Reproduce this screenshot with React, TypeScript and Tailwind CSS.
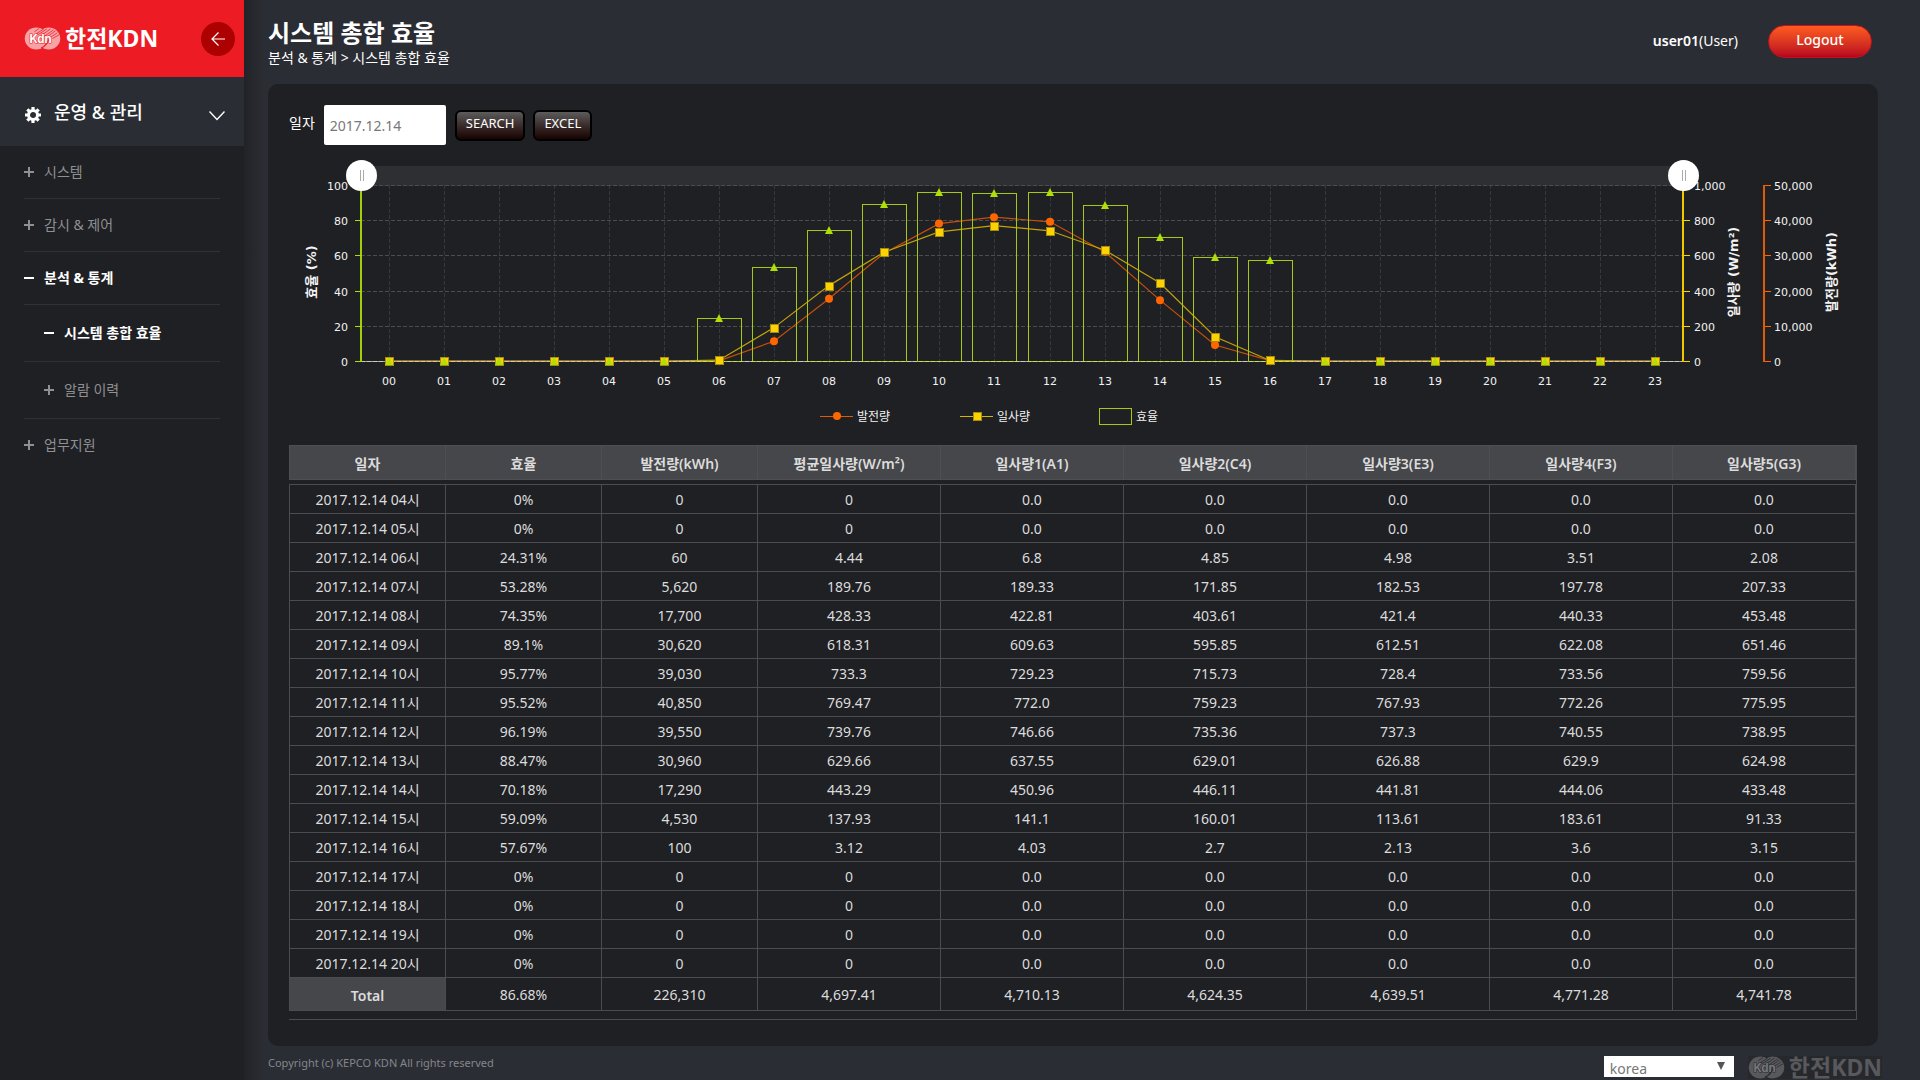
import { useState } from "react";

const CHART_LEFT = 72;
const CHART_RIGHT = 1394;
const CHART_TOP = 40;
const CHART_BOTTOM = 216;
const STEP = (CHART_RIGHT - CHART_LEFT) / 24;
const BAR_WIDTH = 44;

const headers = [
  "일자",
  "효율",
  "발전량(kWh)",
  "평균일사량(W/m²)",
  "일사량1(A1)",
  "일사량2(C4)",
  "일사량3(E3)",
  "일사량4(F3)",
  "일사량5(G3)",
];

const rows = [
  ["04", "0%", "0", "0", "0.0", "0.0", "0.0", "0.0", "0.0"],
  ["05", "0%", "0", "0", "0.0", "0.0", "0.0", "0.0", "0.0"],
  ["06", "24.31%", "60", "4.44", "6.8", "4.85", "4.98", "3.51", "2.08"],
  ["07", "53.28%", "5,620", "189.76", "189.33", "171.85", "182.53", "197.78", "207.33"],
  ["08", "74.35%", "17,700", "428.33", "422.81", "403.61", "421.4", "440.33", "453.48"],
  ["09", "89.1%", "30,620", "618.31", "609.63", "595.85", "612.51", "622.08", "651.46"],
  ["10", "95.77%", "39,030", "733.3", "729.23", "715.73", "728.4", "733.56", "759.56"],
  ["11", "95.52%", "40,850", "769.47", "772.0", "759.23", "767.93", "772.26", "775.95"],
  ["12", "96.19%", "39,550", "739.76", "746.66", "735.36", "737.3", "740.55", "738.95"],
  ["13", "88.47%", "30,960", "629.66", "637.55", "629.01", "626.88", "629.9", "624.98"],
  ["14", "70.18%", "17,290", "443.29", "450.96", "446.11", "441.81", "444.06", "433.48"],
  ["15", "59.09%", "4,530", "137.93", "141.1", "160.01", "113.61", "183.61", "91.33"],
  ["16", "57.67%", "100", "3.12", "4.03", "2.7", "2.13", "3.6", "3.15"],
  ["17", "0%", "0", "0", "0.0", "0.0", "0.0", "0.0", "0.0"],
  ["18", "0%", "0", "0", "0.0", "0.0", "0.0", "0.0", "0.0"],
  ["19", "0%", "0", "0", "0.0", "0.0", "0.0", "0.0", "0.0"],
  ["20", "0%", "0", "0", "0.0", "0.0", "0.0", "0.0", "0.0"],
];

const totals = ["86.68%", "226,310", "4,697.41", "4,710.13", "4,624.35", "4,639.51", "4,771.28", "4,741.78"];

const hours = Array.from({ length: 24 }, (_, i) => String(i).padStart(2, "0"));

const toNumber = (value: string) => parseFloat(value.replace(/,/g, ""));

const points = hours.map((hour, i) => {
  const row = rows.find((r) => r[0] === hour);
  const y = (value: number, max: number) =>
    CHART_BOTTOM - (value / max) * (CHART_BOTTOM - CHART_TOP);
  return {
    hour,
    x: Math.round(CHART_LEFT + STEP * (i + 0.5)),
    efficiency: Math.round(y(row ? toNumber(row[1]) : 0, 100)),
    power: y(row ? toNumber(row[2]) : 0, 50000),
    solar: y(row ? toNumber(row[3]) : 0, 1000),
  };
});

function Logo({ muted = false }: { muted?: boolean }) {
  const back = muted ? "#58595d" : "#f7a3a6";
  const line = muted ? "#28292d" : "#ed1c24";
  return (
    <div className={`flex items-center gap-1 ${muted ? "bg-[#27282c] text-[#58595d]" : "text-white"}`}>
      <svg width="37" height="23" viewBox="0 0 37 24">
        <ellipse cx="25" cy="12" rx="12" ry="11.5" fill={back} />
        <ellipse cx="12" cy="12" rx="12" ry="11.5" fill={back} />
        <g stroke={line} strokeWidth="0.8" fill="none">
          <path d="M10 5 L15 1.500 M12 7 L20 2 M14 8 L23 2 M14 11 L27 2 M17 12 L30 3 M21 12 L32 4 M25 12 L34 6 M29 12 L36 8" />
          <path d="M17 22 C22 20 24 16 25 13" strokeWidth="1.2" />
        </g>
        <text
          x="5"
          y="17"
          fontSize="12"
          fontWeight="700"
          fontFamily="Inter, sans-serif"
          fill={muted ? "#77787c" : "#fff"}
          stroke={line}
          strokeWidth="1.2"
          paintOrder="stroke"
        >
          Kdn
        </text>
      </svg>
      <span className="text-[23px] leading-[23px] font-bold">한전KDN</span>
    </div>
  );
}

function GearIcon() {
  return (
    <svg width="16" height="16" viewBox="0 0 16 16" fill="#fff">
      {[0, 45, 90, 135].map((angle) => (
        <path key={angle} d="M6.4 0h3.2v4H6.4zM6.4 12h3.2v4H6.4z" transform={`rotate(${angle} 8 8)`} />
      ))}
      <circle cx="8" cy="8" r="4.5" fill="none" stroke="#fff" strokeWidth="3" />
    </svg>
  );
}

type MenuItemProps = {
  label: string;
  open?: boolean;
  sub?: boolean;
  last?: boolean;
};

function MenuItem({ label, open, sub, last }: MenuItemProps) {
  return (
    <li className={last ? "" : "border-b border-[#303135]"}>
      <a
        href="#"
        className={`flex items-center gap-[10px] text-sm ${sub ? "h-14 pl-5" : "h-[52px]"} ${
          open ? "font-bold text-white" : "text-[#8f9093]"
        }`}
      >
        <svg width="10" height="10" viewBox="0 0 10 10" fill="currentColor">
          <path d="M0 4h10v2H0z" />
          {!open && <path d="M4 0h2v10H4z" />}
        </svg>
        {label}
      </a>
    </li>
  );
}

function Sidebar() {
  return (
    <aside className="w-[244px] shrink-0 bg-[#1f2024]">
      <div className="flex h-[77px] items-center justify-between bg-[#ed1c24] pr-[9px] pl-6">
        <Logo />
        <button aria-label="메뉴 닫기" className="flex size-[34px] items-center justify-center rounded-full bg-[#ad0000]">
          <svg width="14" height="14" viewBox="0 0 14 14" fill="none" stroke="#fff" strokeWidth="1.2">
            <path d="M14 7H1M7.500 0.500L1 7l6.500 6.500" />
          </svg>
        </button>
      </div>
      <button className="flex h-[69px] w-full items-center bg-[#2b2d34] pr-[19px] pl-[25px] text-white">
        <span className="pt-1.5">
          <GearIcon />
        </span>
        <span className="ml-[13px] grow text-left text-lg font-medium">운영 &amp; 관리</span>
        <svg className="mt-2" width="16" height="10" viewBox="0 0 16 10" fill="none" stroke="#fff" strokeWidth="1.4">
          <path d="M0.500 0.500L8 8.500l7.500-8" />
        </svg>
      </button>
      <ul className="px-6">
        <MenuItem label="시스템" />
        <MenuItem label="감시 & 제어" />
        <MenuItem label="분석 & 통계" open />
        <MenuItem label="시스템 총합 효율" open sub />
        <MenuItem label="알람 이력" sub />
        <MenuItem label="업무지원" last />
      </ul>
    </aside>
  );
}

function Handle({ x }: { x: number }) {
  return (
    <g>
      <circle cx={x + 0.5} cy="30.5" r="15.5" fill="#fff" />
      <path d={`M${x - 0.5} 25v11M${x + 2.5} 25v11`} stroke="#aaa" strokeWidth="1" />
    </g>
  );
}

function EfficiencyChart() {
  const levels = [0, 1, 2, 3, 4, 5];
  const levelY = (level: number) =>
    Math.round(CHART_BOTTOM - (level / 5) * (CHART_BOTTOM - CHART_TOP));
  const linePoints = (key: "power" | "solar") => points.map((p) => `${p.x},${p[key]}`).join(" ");

  return (
    <svg
      viewBox="0 0 1568 300"
      className="block h-auto w-full"
      fontFamily="'DejaVu Sans', 'Noto Sans CJK KR', sans-serif"
      fontSize="11"
      fill="#f2f2f2"
      role="img"
      aria-label="시스템 총합 효율"
    >
      <rect x={CHART_LEFT} y="21" width={CHART_RIGHT - CHART_LEFT} height="20" fill="#2e2f33" />

      {/* grid */}
      <g strokeDasharray="4 2" shapeRendering="crispEdges">
        {points.map((p) => (
          <line key={p.hour} x1={p.x + 0.5} x2={p.x + 0.5} y1={CHART_TOP} y2={CHART_BOTTOM + 5} stroke="#37383c" />
        ))}
        {levels.map((level) => (
          <line
            key={level}
            x1={CHART_LEFT}
            x2={CHART_RIGHT}
            y1={levelY(level) + 0.5}
            y2={levelY(level) + 0.5}
            stroke="#4b4c50"
          />
        ))}
      </g>

      {/* lines */}
      <polyline points={linePoints("power")} fill="none" stroke="#c4500a" strokeWidth="1.2" />
      <polyline points={linePoints("solar")} fill="none" stroke="#c4a20a" strokeWidth="1.2" />
      <path d={`M${CHART_LEFT} ${CHART_BOTTOM + 0.5}H${CHART_RIGHT}`} stroke="#a5a5a5" />
      {points.map((p) => (
        <circle key={p.hour} cx={p.x} cy={p.power} r="4" fill="#ff6600" />
      ))}

      {/* bars */}
      {points.map((p) => (
        <rect
          key={p.hour}
          x={p.x - BAR_WIDTH / 2 + 0.5}
          y={p.efficiency + 0.5}
          width={BAR_WIDTH}
          height={CHART_BOTTOM - p.efficiency}
          fill="none"
          stroke="#a3c911"
        />
      ))}
      <path
        d={`M${CHART_LEFT} ${CHART_BOTTOM + 0.5}H${CHART_RIGHT}`}
        stroke="#e8e8b0"
        strokeOpacity="0.6"
        strokeDasharray="4 2"
      />
      {points.map((p) => (
        <g key={p.hour}>
          <rect
            x={p.x - 3.5}
            y={Math.round(p.solar) - 3.5}
            width="8"
            height="8"
            fill="#fcd202"
            stroke="#a58b10"
          />
          <path d={`M${p.x} ${p.efficiency - 4}l4 8h-8z`} fill="#b0de09" />
        </g>
      ))}

      {/* axes */}
      <g shapeRendering="crispEdges" fill="none">
        <path d={`M${CHART_LEFT} ${CHART_TOP}V${CHART_BOTTOM + 1}`} stroke="#a3cf0a" strokeWidth="2" />
        <path d={`M${CHART_RIGHT} ${CHART_TOP}V${CHART_BOTTOM + 1}`} stroke="#f0c800" strokeWidth="2" />
        <path d={`M1475 ${CHART_TOP}V${CHART_BOTTOM + 1}`} stroke="#e05c04" strokeWidth="2" />
        {levels.map((level) => (
          <g key={level}>
            <path d={`M66 ${levelY(level) + 0.5}h6`} stroke="#b0de09" />
            <path d={`M1395 ${levelY(level) + 0.5}h6`} stroke="#fcd202" />
            <path d={`M1476 ${levelY(level) + 0.5}h6`} stroke="#ff6600" />
          </g>
        ))}
      </g>
      {levels.map((level) => (
        <g key={level}>
          <text x="59" y={levelY(level) + 5} textAnchor="end">
            {level * 20}
          </text>
          <text x="1405" y={levelY(level) + 5}>
            {(level * 200).toLocaleString("en-US")}
          </text>
          <text x="1485" y={levelY(level) + 5}>
            {(level * 10000).toLocaleString("en-US")}
          </text>
        </g>
      ))}
      {points.map((p) => (
        <text key={p.hour} x={p.x} y="240" textAnchor="middle">
          {p.hour}
        </text>
      ))}
      <g fontWeight="700" fontSize="13" textAnchor="middle">
        <text transform="translate(27 127) rotate(-90)">효율 (%)</text>
        <text transform="translate(1449 127) rotate(-90)">일사량 (W/m²)</text>
        <text transform="translate(1547 127) rotate(-90)">발전량(kWh)</text>
      </g>

      <Handle x={CHART_LEFT} />
      <Handle x={CHART_RIGHT} />

      {/* legend */}
      <path d="M531 271.500h33" stroke="#e05c04" />
      <circle cx="548" cy="271" r="4" fill="#ff6600" />
      <path d="M671 271.500h33" stroke="#d8b404" />
      <rect x="684.500" y="267.500" width="8" height="8" fill="#fcd202" stroke="#a58b10" />
      <rect x="810.500" y="263.500" width="32" height="16" fill="none" stroke="#a3c911" />
      <g fontSize="12">
        <text x="568" y="276">발전량</text>
        <text x="708" y="276">일사량</text>
        <text x="847" y="276">효율</text>
      </g>
    </svg>
  );
}

function DataTable() {
  return (
    <div className="border-r border-b border-[#4b4c50] pb-2">
      <table className="w-full table-fixed border-collapse text-center text-sm text-[#dcdcdc]">
        <colgroup>
          <col className="w-[156px]" />
          <col className="w-[156px]" />
          <col className="w-[156px]" />
          <col span={6} />
        </colgroup>
        <thead>
          <tr className="h-[34px] bg-[#46474b]">
            {headers.map((header) => (
              <th key={header} scope="col" className="border border-[#4e4f53] p-0 pt-0.5 font-semibold">
                {header}
              </th>
            ))}
          </tr>
        </thead>
        <tbody>
          <tr aria-hidden="true" className="h-[5px]">
            <td colSpan={9} className="p-0" />
          </tr>
          {rows.map(([hour, ...values]) => (
            <tr key={hour} className="h-[29px]">
              <td className="border border-[#4b4c50] p-0 pt-px">2017.12.14 {hour}시</td>
              {values.map((value, i) => (
                <td key={i} className="border border-[#4b4c50] p-0 pt-px">
                  {value}
                </td>
              ))}
            </tr>
          ))}
        </tbody>
        <tfoot>
          <tr className="h-[33px]">
            <th scope="row" className="border border-[#4b4c50] bg-[#46474b] p-0 pt-1 font-semibold">
              Total
            </th>
            {totals.map((total) => (
              <td key={total} className="border border-[#4b4c50] p-0 pt-px">
                {total}
              </td>
            ))}
          </tr>
        </tfoot>
      </table>
    </div>
  );
}

export default function App() {
  const [date, setDate] = useState("2017.12.14");
  const [lang, setLang] = useState("korea");

  const toolButton =
    "h-[31px] rounded-md border-2 border-black bg-linear-to-b from-[#5c5c5c] to-[#180404] px-[9px] pb-0.5 text-[13px] text-white";

  return (
    <div className="flex min-h-screen bg-[#2b2d34] font-['Noto_Sans','Noto_Sans_CJK_KR',sans-serif] text-white">
      <Sidebar />
      <main className="flex min-w-0 grow flex-col bg-linear-to-r from-[#222327] to-[#2b2d34] to-[20px] pr-[42px] pl-6">
        <header className="flex h-[84px] items-start justify-between">
          <div className="pt-[18px]">
            <h1 className="text-2xl leading-[30px] font-bold">시스템 총합 효율</h1>
            <p className="text-sm leading-5">분석 &amp; 통계 &gt; 시스템 총합 효율</p>
          </div>
          <div className="flex items-center gap-[30px] pt-[25px] pr-[6px]">
            <span className="pb-0.5 text-sm">
              <b className="font-semibold">user01</b>(User)
            </span>
            <button className="h-[33px] w-[104px] rounded-full border border-[#c0141c] bg-linear-to-b from-[#ff5a1f] to-[#b8001f] pb-1 text-sm font-medium">
              Logout
            </button>
          </div>
        </header>

        <section className="rounded-[10px] bg-[#1f2024] px-[21px] pt-[21px] pb-[26px]">
          <div className="flex h-10 items-center">
            <label htmlFor="date" className="mr-[9px] pb-1 text-sm">
              일자
            </label>
            <input
              id="date"
              value={date}
              onChange={(e) => setDate(e.target.value)}
              className="mr-[9px] h-10 w-[122px] rounded-xs bg-white px-[6px] text-sm text-[#777]"
            />
            <button className={toolButton}>SEARCH</button>
            <button className={`ml-2 ${toolButton}`}>EXCEL</button>
          </div>
          <EfficiencyChart />
          <DataTable />
        </section>

        <footer className="flex h-[34px] items-start justify-between text-[11px] leading-4 text-[#85868a]">
          <p className="pt-[9px]">Copyright (c) KEPCO KDN All rights reserved</p>
          <div className="-mr-1 flex items-start gap-[14px] pt-[10px]">
            <div className="relative">
              <select
                aria-label="language"
                value={lang}
                onChange={(e) => setLang(e.target.value)}
                className="block h-[21px] w-[130px] appearance-none bg-white px-[6px] pt-1 text-sm leading-4 text-[#777]"
              >
                <option value="korea">korea</option>
                <option value="english">english</option>
              </select>
              <svg className="pointer-events-none absolute top-[6px] right-[9px]" width="8" height="8" viewBox="0 0 8 8" fill="#555">
                <path d="M0 0h8L4 8z" />
              </svg>
            </div>
            <Logo muted />
          </div>
        </footer>
      </main>
    </div>
  );
}
